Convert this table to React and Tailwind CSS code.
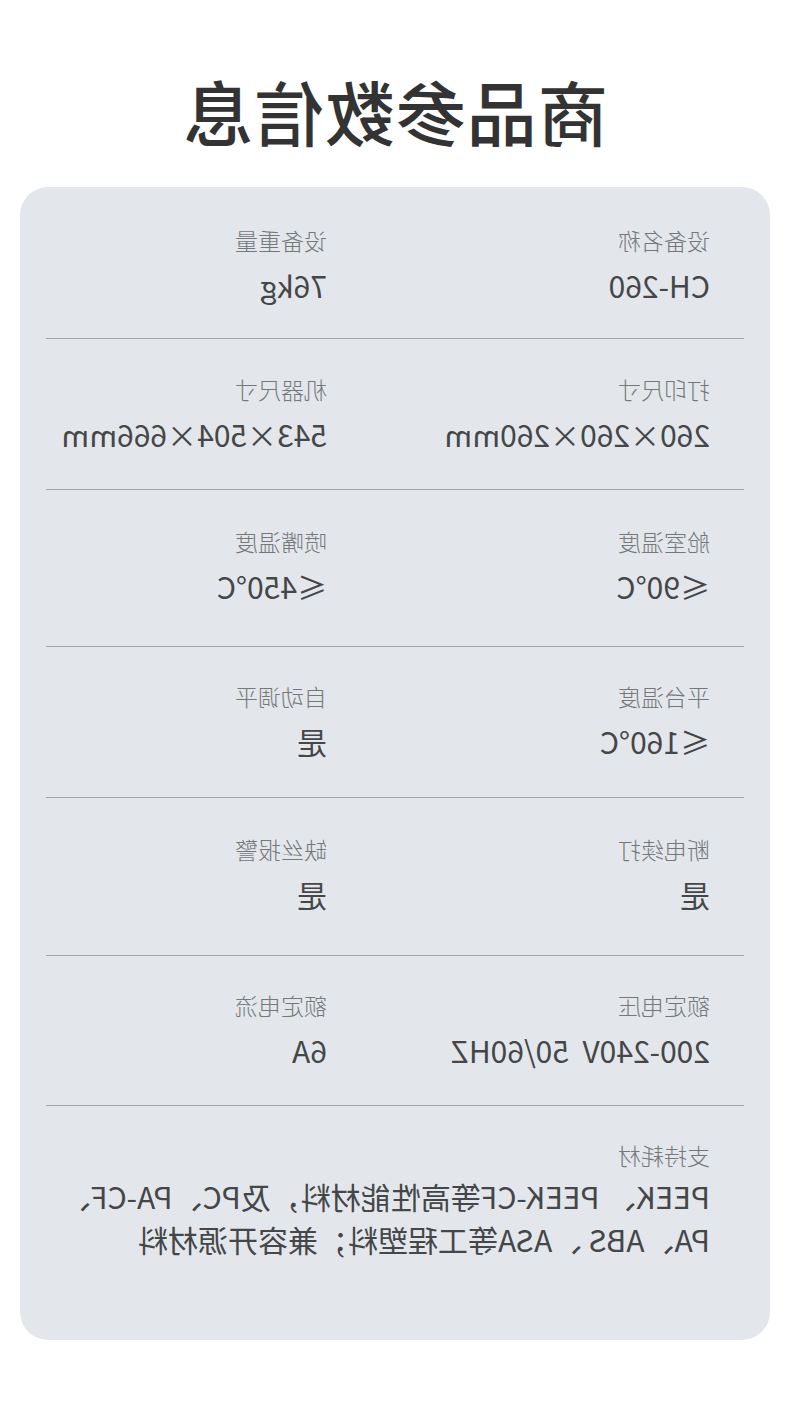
import React from "react";

const rows = [
  {
    pb: "pb-[33px]",
    pt: "pt-[38px]",
    items: [
      ["设备名称", "CH-260"],
      ["设备重量", "76kg"],
    ],
  },
  {
    pb: "pb-[35px]",
    pt: "pt-[35px]",
    items: [
      ["打印尺寸", "260×260×260mm"],
      ["机器尺寸", "543×504×666mm"],
    ],
  },
  {
    pb: "pb-[40px]",
    pt: "pt-[36px]",
    items: [
      ["舱室温度", "≤90°C"],
      ["喷嘴温度", "≤450°C"],
    ],
  },
  {
    pb: "pb-[36px]",
    pt: "pt-[34px]",
    items: [
      ["平台温度", "≤160°C"],
      ["自动调平", "是"],
    ],
  },
  {
    pb: "pb-[41px]",
    pt: "pt-[36px]",
    items: [
      ["断电续打", "是"],
      ["缺丝报警", "是"],
    ],
  },
  {
    pb: "pb-[35px]",
    pt: "pt-[34px]",
    items: [
      ["额定电压", "200-240V  50/60HZ"],
      ["额定电流", "6A"],
    ],
  },
];

const Cell = ({ label, value }) => (
  <div className="flex flex-col gap-[10px]">
    <span className="text-[23px] leading-[30px] font-light text-[#75787b]">{label}</span>
    <span className="text-[30px] leading-[40px] text-[#444648] whitespace-pre">{value}</span>
  </div>
);

export default function App() {
  return (
    <div className="w-[790px] h-[1419px] bg-white -scale-x-100 font-['Noto_Sans_CJK_SC','Noto_Sans',sans-serif]">
      <h1 className="pt-[76px] text-center text-[70px] leading-none font-medium text-[#333333] tracking-[1px]">
        商品参数信息
      </h1>
      <div className="mx-[20px] mt-[41px] rounded-[28px] bg-[#e3e7eb] h-[1153px]">
        {rows.map((row, i) => (
          <div key={i} className={`mx-[26px] border-b border-[#a3a7ab] ${row.pt} ${row.pb}`}>
            <div className="grid grid-cols-[383px_1fr] pl-[34px]">
              {row.items.map(([label, value]) => (
                <Cell key={label} label={label} value={value} />
              ))}
            </div>
          </div>
        ))}
        <div className="mx-[26px] pt-[34px] pl-[34px]">
          <div className="text-[23px] leading-[30px] font-light text-[#75787b]">支持耗材</div>
          <p className="mt-[5px] text-[30px] leading-[43px] text-[#444648]">
            PEEK、 PEEK-CF等高性能材料，及PC、PA-CF、
            <br />
            PA、ABS 、ASA等工程塑料；兼容开源材料
          </p>
        </div>
      </div>
    </div>
  );
}
